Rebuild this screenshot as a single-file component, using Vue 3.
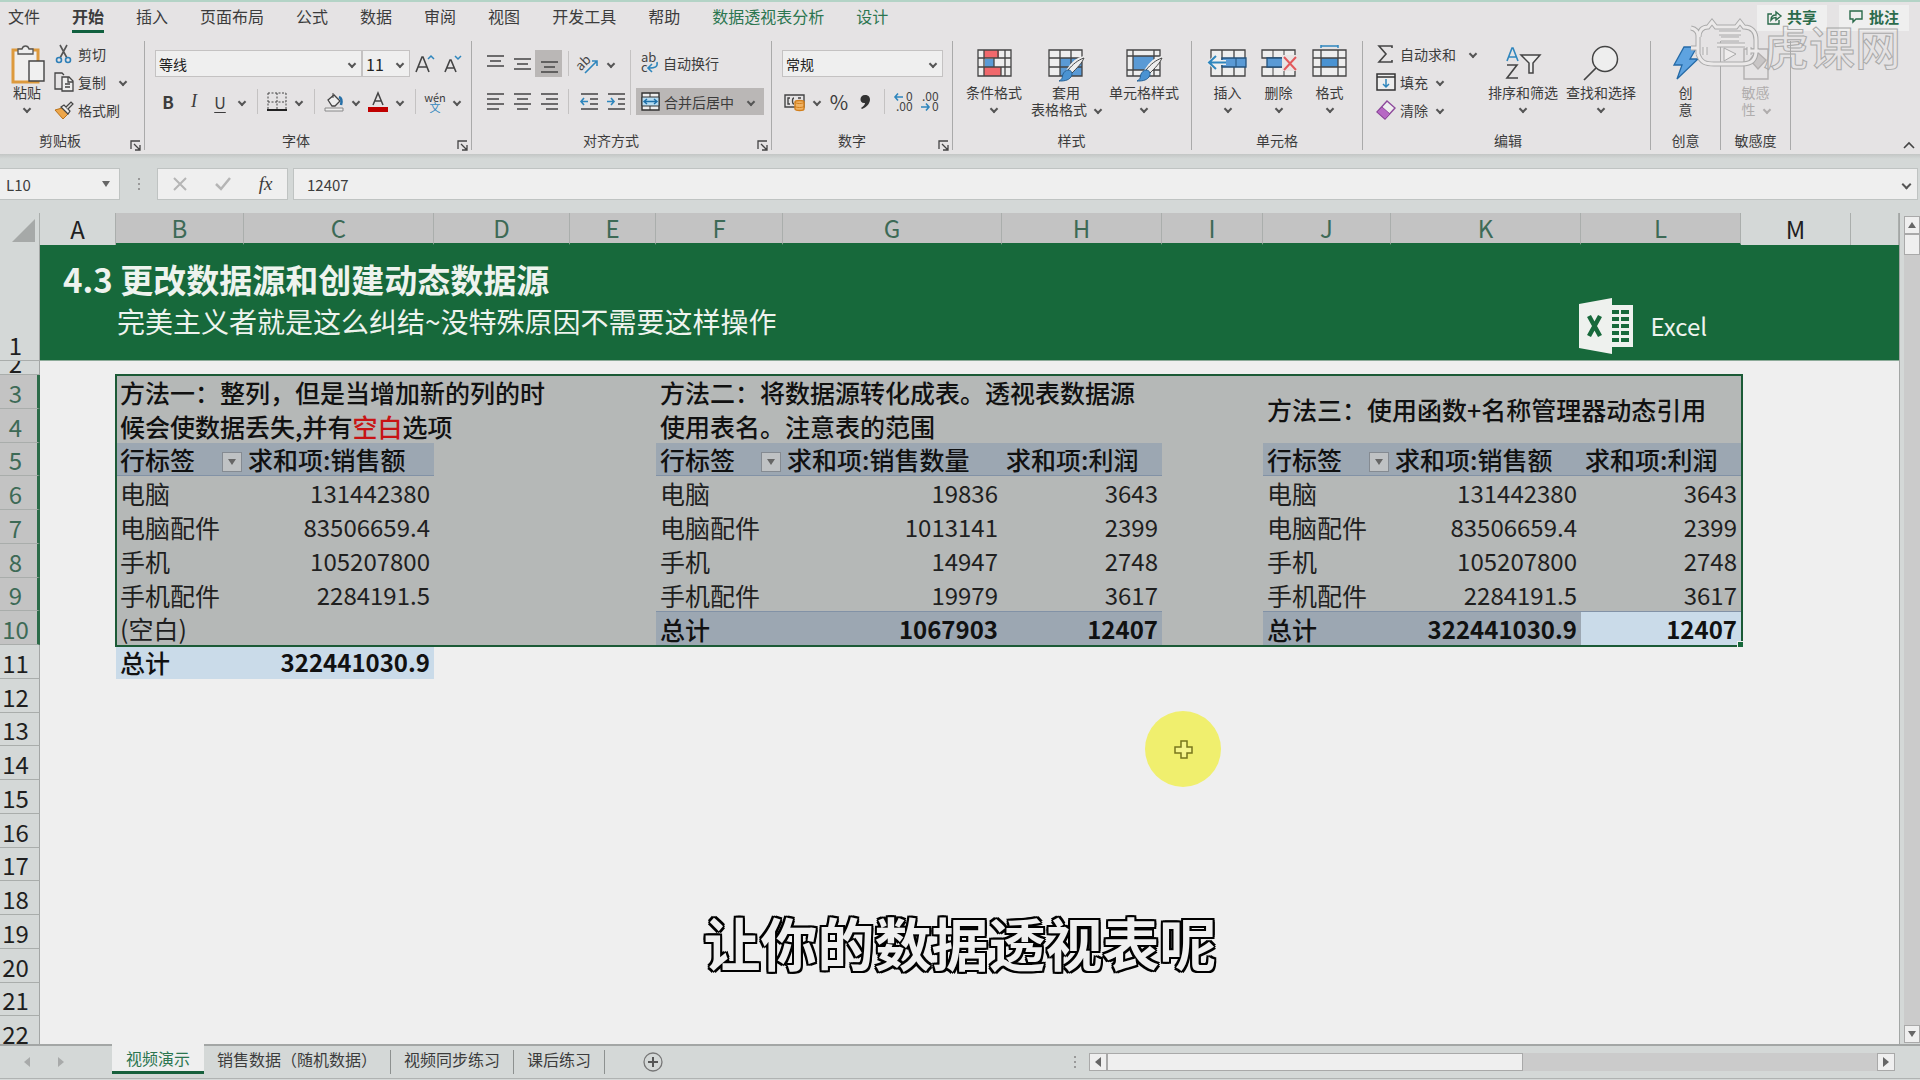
<template>
  <div class="app">
    <header class="tab-bar">
      <nav class="tabs">
        <a
          v-for="tab in tabs"
          :key="tab.name"
          href="#"
          class="tab"
          :class="{ active: tab.active, context: tab.context }"
        >{{ tab.name }}</a>
      </nav>
      <div class="tab-actions">
        <button class="action">
          <svg width="15" height="16" viewBox="0 0 15 16" fill="none" stroke="#2b6b4b" stroke-width="1.4">
            <path d="M5 5H1v10h11v-4M4 11c0-4 3-5 5-5V3l5 4-5 4V8.500c-2 0-4 1-5 2.500z" />
          </svg>
          共享
        </button>
        <button class="action">
          <svg width="15" height="14" viewBox="0 0 15 14" fill="none" stroke="#2b6b4b" stroke-width="1.4">
            <path d="M1 1h12v8H7l-3 3V9H1z" />
          </svg>
          批注
        </button>
      </div>
    </header>

    <section class="ribbon">
      <div class="group clipboard">
        <div class="group-body">
          <button class="big paste">
            <svg width="36" height="38" viewBox="0 0 36 38">
              <path d="M4 5h25v32H4z" fill="#f0efee" stroke="#dd9a3d" stroke-width="3" />
              <path d="M9 9V4h4c1-4 6-4 7 0h4v5z" fill="#eee" stroke="#555" stroke-width="1.3" />
              <path d="M20 16h15v20H20z" fill="#f0f0f0" stroke="#444" stroke-width="1.4" />
            </svg>
            <span>粘贴</span>
            <i class="caret"></i>
          </button>
          <div class="stack">
            <button class="small">
              <svg width="20" height="20" viewBox="0 0 20 20" fill="none">
                <path d="M6 1l7 13M13 1L6 14" stroke="#555" stroke-width="1.6" />
                <circle cx="5" cy="16" r="2.500" stroke="#2d7fb8" stroke-width="1.6" />
                <circle cx="14" cy="16" r="2.500" stroke="#2d7fb8" stroke-width="1.6" />
              </svg>
              剪切
            </button>
            <button class="small">
              <svg width="20" height="20" viewBox="0 0 20 20" fill="none" stroke="#444" stroke-width="1.3">
                <path d="M8 17H1V1h7l2 2" />
                <path d="M8 5h7l4 4v10H8z" fill="#eee" />
                <path d="M14 5v5h5M11 12h5M11 15h5" />
              </svg>
              复制
              <i class="caret copy-caret"></i>
            </button>
            <button class="small">
              <svg width="20" height="20" viewBox="0 0 20 20">
                <path d="M1 10l7-2 6 6-5 5z" fill="#eda64a" stroke="#b97118" />
                <path d="M7 7l3-2 6 6-2 3z" fill="#eee" stroke="#444" stroke-width="1.2" />
                <path d="M12 7l5-5 2 2-5 5" fill="#ddd" stroke="#444" stroke-width="1.2" />
              </svg>
              格式刷
            </button>
          </div>
        </div>
        <footer class="group-footer"><span>剪贴板</span><LaunchIcon /></footer>
      </div>

      <div class="group font">
        <div class="group-body rows">
          <div class="row">
            <label class="select font-name">
              <select aria-label="字体"><option>等线</option></select>
              <i class="caret"></i>
            </label>
            <label class="select font-size">
              <select aria-label="字号"><option>11</option></select>
              <i class="caret"></i>
            </label>
            <button class="tool wide" aria-label="增大字号">
              <svg width="20" height="20" viewBox="0 0 20 20" fill="none">
                <path d="M1 18L7 3h1l6 15M3 13h9" stroke="#444" stroke-width="1.6" />
                <path d="M13 5l3-3 3 3" stroke="#2f86bd" stroke-width="1.5" />
              </svg>
            </button>
            <button class="tool" aria-label="减小字号">
              <svg width="18" height="20" viewBox="0 0 18 20" fill="none">
                <path d="M1 18L6 6h1l5 12M3 14h7" stroke="#444" stroke-width="1.600" />
                <path d="M11 2l3 3 3-3" stroke="#2f86bd" stroke-width="1.5" />
              </svg>
            </button>
          </div>
          <div class="row">
            <button class="tool bold">B</button>
            <button class="tool italic">I</button>
            <button class="tool underline">U</button>
            <button class="drop" aria-label="下划线"><i class="caret"></i></button>
            <span class="divider"></span>
            <button class="tool" aria-label="边框">
              <svg width="20" height="20" viewBox="0 0 20 20" fill="none" stroke="#444">
                <path d="M1 1h18M1 10h18M1 1v17M10 1v17M19 1v17" stroke-dasharray="2 1.500" />
                <path d="M0 18h20" stroke="#222" stroke-width="2" />
              </svg>
            </button>
            <button class="drop" aria-label="边框选项"><i class="caret"></i></button>
            <span class="divider"></span>
            <button class="tool" aria-label="填充颜色">
              <svg width="20" height="20" viewBox="0 0 20 20" fill="none">
                <path d="M4 8l6-5 6 6-5 5H8z" fill="#eee" stroke="#444" stroke-width="1.3" />
                <path d="M9 6V1" stroke="#444" />
                <path d="M15 5c3 1 3 4 2 8" stroke="#2670a8" stroke-width="2.500" />
                <path d="M1 16h18v3H1z" fill="#eee" stroke="#888" />
              </svg>
            </button>
            <button class="drop" aria-label="填充选项"><i class="caret"></i></button>
            <button class="tool" aria-label="字体颜色">
              <svg width="20" height="20" viewBox="0 0 20 20" fill="none">
                <path d="M5 13l5-12 5 12M7 9h6" stroke="#444" stroke-width="1.5" />
                <path d="M0 15h20v5H0z" fill="#c00000" />
              </svg>
            </button>
            <button class="drop" aria-label="字体颜色选项"><i class="caret"></i></button>
            <span class="divider"></span>
            <button class="tool phonetic"><span>wén</span><b>文</b></button>
            <button class="drop" aria-label="拼音选项"><i class="caret"></i></button>
          </div>
        </div>
        <footer class="group-footer"><span>字体</span><LaunchIcon /></footer>
      </div>

      <div class="group align">
        <div class="group-body rows">
          <div class="columns">
            <div class="column">
              <div class="row">
                <button
                  v-for="(lines, i) in vertical"
                  :key="i"
                  class="tool line"
                  :class="{ pressed: i === 2 }"
                  :aria-label="'垂直对齐' + (i + 1)"
                >
                  <svg width="18" height="20" viewBox="0 0 18 20" stroke="#444" stroke-width="1.400"><path :d="lines" /></svg>
                </button>
                <span class="divider"></span>
                <button class="tool line" aria-label="方向">
                  <svg width="20" height="20" viewBox="0 0 20 20" fill="none">
                    <text x="-3" y="12" font-size="13" fill="#444" transform="rotate(-45 6 9)">ab</text>
                    <path d="M6 19L18 7M13 7h5v5" stroke="#2f86bd" stroke-width="1.600" />
                  </svg>
                </button>
                <button class="drop" aria-label="方向选项"><i class="caret"></i></button>
              </div>
              <div class="row">
                <button v-for="(lines, i) in horizontal" :key="i" class="tool line" :aria-label="'水平对齐' + (i + 1)">
                  <svg width="18" height="18" viewBox="0 0 18 18" stroke="#444" stroke-width="1.400"><path :d="lines" /></svg>
                </button>
                <span class="divider"></span>
                <button class="tool line" aria-label="减少缩进">
                  <svg width="18" height="18" viewBox="0 0 18 18" fill="none" stroke="#444" stroke-width="1.400">
                    <path d="M1 1h17M10 6h8M10 11h8M1 16h17" />
                    <path d="M8 8.500H1M4 5L1 8.500 4 12" stroke="#2f86bd" stroke-width="1.600" />
                  </svg>
                </button>
                <button class="tool line" aria-label="增加缩进">
                  <svg width="18" height="18" viewBox="0 0 18 18" fill="none" stroke="#444" stroke-width="1.400">
                    <path d="M1 1h17M11 6h7M11 11h7M1 16h17" />
                    <path d="M0 8.500h7M4 5l3 3.500L4 12" stroke="#2f86bd" stroke-width="1.600" />
                  </svg>
                </button>
              </div>
            </div>
            <div class="column wrap">
              <button class="small text-tool">
                <svg width="18" height="20" viewBox="0 0 18 20" fill="none">
                  <text x="0" y="9" font-size="13" fill="#444">ab</text>
                  <text x="0" y="19" font-size="13" fill="#444">c</text>
                  <path d="M16 9c1 5-2 6-8 6M11 11l-4 4 4 4" stroke="#2f86bd" stroke-width="1.600" />
                </svg>
                自动换行
              </button>
              <button class="small text-tool merge">
                <svg width="19" height="19" viewBox="0 0 19 19" fill="none" stroke="#333">
                  <path d="M1 1h17v17H1z" fill="#eee" stroke-width="1.400" />
                  <path d="M1 5h17v9H1z" fill="#b6dcf2" />
                  <path d="M9 1v4M9 14v4" />
                  <path d="M3 9.500h13M6 7L3 9.500 6 12M13 7l3 2.500-3 2.500" stroke="#1d6fa8" stroke-width="1.400" />
                </svg>
                合并后居中
                <i class="caret merge-caret"></i>
              </button>
            </div>
          </div>
        </div>
        <footer class="group-footer"><span>对齐方式</span><LaunchIcon /></footer>
      </div>

      <div class="group number">
        <div class="group-body rows">
          <div class="row">
            <label class="select format">
              <select aria-label="数字格式"><option>常规</option></select>
              <i class="caret"></i>
            </label>
          </div>
          <div class="row">
            <button class="tool" aria-label="会计数字格式">
              <svg width="22" height="18" viewBox="0 0 22 18" fill="none">
                <path d="M1 2h19v12H1z" stroke="#444" stroke-width="1.400" />
                <path d="M6 5H4v6h2M10 5c-2 0-2 6 0 6M14 5h3" stroke="#444" stroke-width="1.400" />
                <path d="M11 9c0-2 9-2 9 0v7c0 2-9 2-9 0z" fill="#f0b263" stroke="#d27f1c" stroke-width="1.400" />
                <path d="M11 9c0 2 9 2 9 0M11 13c0 2 9 2 9 0" stroke="#d27f1c" />
              </svg>
            </button>
            <button class="drop" aria-label="会计格式选项"><i class="caret"></i></button>
            <button class="tool percent">%</button>
            <button class="tool" aria-label="千位分隔样式">
              <svg width="12" height="18" viewBox="0 0 12 18">
                <path d="M6 2c8 0 6 11-3 14l-1-1c3-2 4-4 4-5-6 1-6-8 0-8z" fill="#333" />
              </svg>
            </button>
            <span class="divider"></span>
            <button class="tool" aria-label="增加小数位数">
              <svg width="20" height="20" viewBox="0 0 20 20" fill="none">
                <path d="M9 5H1M4 1.500L1 5l3 3.500" stroke="#2f86bd" stroke-width="1.600" />
                <text x="12" y="9" font-size="12" fill="#444">0</text>
                <text x="2" y="19" font-size="12" fill="#444">.00</text>
              </svg>
            </button>
            <button class="tool" aria-label="减少小数位数">
              <svg width="20" height="20" viewBox="0 0 20 20" fill="none">
                <path d="M1 15h8M6 11.500L9 15l-3 3.500" stroke="#2f86bd" stroke-width="1.600" />
                <text x="2" y="9" font-size="12" fill="#444">.00</text>
                <text x="12" y="19" font-size="12" fill="#444">0</text>
              </svg>
            </button>
          </div>
        </div>
        <footer class="group-footer"><span>数字</span><LaunchIcon /></footer>
      </div>

      <div class="group styles">
        <div class="group-body">
          <button class="big w72">
            <svg width="36" height="38" viewBox="0 0 36 38">
              <path d="M2 5h33v26H2z" fill="#eee" />
              <path d="M8 5h15v8H8zM8 22h17v9H8z" fill="#f0686c" />
              <path d="M9 14h9v8H9z" fill="#5a9ad5" />
              <path d="M2 5h33v26H2zM2 13h33M2 22h33M8 5v26M29 5v26M22 5v8M18 13v9M25 22v9" fill="none" stroke="#444" stroke-width="1.300" />
            </svg>
            <span>条件格式</span>
            <i class="caret"></i>
          </button>
          <button class="big w72">
            <svg width="36" height="38" viewBox="0 0 36 38">
              <path d="M1 5h33v26H1z" fill="#eee" />
              <path d="M12 13h22v18H12z" fill="#5a9ad5" />
              <path d="M1 5h33v26H1zM1 13h33M1 22h33M12 5v26M23 5v26" fill="none" stroke="#444" stroke-width="1.300" />
              <path d="M36 13c-4 2-11 9-14 14l-2-1c3-5 9-12 16-13z" fill="#eee" stroke="#eee" stroke-width="4" />
              <path d="M36 13c-2 5-7 10-12 15l-4-3c5-6 10-10 16-12z" fill="#eee" stroke="#444" />
              <path d="M20 25c4 0 5 4 3 7-3 4-8 4-12 4 4-2 3-4 4-7 1-2 3-4 5-4z" fill="#4a93d2" stroke="#276194" />
            </svg>
            <span>套用</span>
            <span class="inline">表格格式 <i class="caret"></i></span>
          </button>
          <button class="big w84">
            <svg width="36" height="38" viewBox="0 0 36 38">
              <path d="M1 5h33v26H1z" fill="#eee" />
              <path d="M7 11h21v14H7z" fill="#5a9ad5" />
              <path d="M1 5h33v26H1zM1 11h33M1 25h33M7 5v26M28 5v26" fill="none" stroke="#444" stroke-width="1.300" />
              <path d="M36 13c-4 2-11 9-14 14l-2-1c3-5 9-12 16-13z" fill="#eee" stroke="#eee" stroke-width="4" />
              <path d="M36 13c-2 5-7 10-12 15l-4-3c5-6 10-10 16-12z" fill="#eee" stroke="#444" />
              <path d="M20 25c4 0 5 4 3 7-3 4-8 4-12 4 4-2 3-4 4-7 1-2 3-4 5-4z" fill="#4a93d2" stroke="#276194" />
            </svg>
            <span>单元格样式</span>
            <i class="caret"></i>
          </button>
        </div>
        <footer class="group-footer"><span>样式</span></footer>
      </div>

      <div class="group cells">
        <div class="group-body">
          <button class="big w51">
            <svg width="40" height="38" viewBox="0 0 40 38">
              <path d="M3 5h34v26H3z" fill="#eee" />
              <path d="M3 5h34v26H3zM14 5v26M26 5v26" fill="none" stroke="#444" stroke-width="1.300" />
              <path d="M14 13h24v9H14z" fill="#5a9ad5" stroke="#24527b" stroke-width="1.300" />
              <path d="M28 13v9" stroke="#24527b" />
              <path d="M18 17.500H3M9 11l-7 6.500L9 24" fill="none" stroke="#eee" stroke-width="5" />
              <path d="M18 17.500H2M8 11l-7 6.500L8 24" fill="none" stroke="#2f86bd" stroke-width="2" />
            </svg>
            <span>插入</span>
            <i class="caret"></i>
          </button>
          <button class="big w51">
            <svg width="36" height="38" viewBox="0 0 36 38">
              <path d="M1 5h33v8H1zM1 22h33v9H1z" fill="#eee" stroke="#444" stroke-width="1.300" />
              <path d="M12 5v8M23 5v8M12 22v9M23 22v9" stroke="#444" />
              <path d="M6 13h16v9H6z" fill="#5a9ad5" stroke="#24527b" stroke-width="1.300" />
              <path d="M21 10h15v16H21z" fill="#e8e4e4" />
              <path d="M23 12l12 13M35 12L23 25" stroke="#e2595c" stroke-width="2" />
            </svg>
            <span>删除</span>
            <i class="caret"></i>
          </button>
          <button class="big w51">
            <svg width="36" height="38" viewBox="0 0 36 38">
              <path d="M1 5h33v26H1z" fill="#eee" />
              <path d="M9 13h17v9H9z" fill="#4a93d2" />
              <path d="M1 5h33v26H1zM1 13h33M1 22h33M9 5v26M26 5v26" fill="none" stroke="#444" stroke-width="1.300" />
              <path d="M9 1h17M9 0v3M26 0v3" stroke="#2f86bd" stroke-width="1.500" />
            </svg>
            <span>格式</span>
            <i class="caret"></i>
          </button>
        </div>
        <footer class="group-footer"><span>单元格</span></footer>
      </div>

      <div class="group editing">
        <div class="group-body">
          <div class="stack edit-stack">
            <button class="small">
              <svg width="20" height="20" viewBox="0 0 20 20" fill="none" stroke="#444" stroke-width="1.600">
                <path d="M16 4V2H3l7 8-7 8h13v-2" />
              </svg>
              自动求和
              <i class="caret sum-caret"></i>
            </button>
            <button class="small">
              <svg width="20" height="20" viewBox="0 0 20 20" fill="none" stroke="#333" stroke-width="1.500">
                <path d="M1 2h18v16H1zM1 5h18" fill="#eee" />
                <path d="M10 7v8M7 12l3 3 3-3" stroke="#2f86bd" />
              </svg>
              填充
              <i class="caret"></i>
            </button>
            <button class="small">
              <svg width="20" height="20" viewBox="0 0 20 20">
                <path d="M11 1l8 7-10 11-8-7z" fill="#eee" stroke="#8e4a9c" stroke-width="1.400" />
                <path d="M6 7l8 7-5 5-8-7z" fill="#b768c4" stroke="#8e4a9c" />
              </svg>
              清除
              <i class="caret"></i>
            </button>
          </div>
          <button class="big w78">
            <svg width="36" height="38" viewBox="0 0 36 38" fill="none">
              <path d="M2 16L7 3h1l5 13M4 12h7" stroke="#2f86bd" stroke-width="1.600" />
              <path d="M2 20h10L2 33h11" stroke="#444" stroke-width="1.600" />
              <path d="M16 10h19l-7 8v10h-4V18z" fill="#eee" stroke="#444" stroke-width="1.500" />
            </svg>
            <span>排序和筛选</span>
            <i class="caret"></i>
          </button>
          <button class="big w78">
            <svg width="36" height="38" viewBox="0 0 36 38">
              <circle cx="22" cy="14" r="12.500" fill="#eee" stroke="#444" stroke-width="1.500" />
              <path d="M13 23L1 35" stroke="#444" stroke-width="1.700" />
            </svg>
            <span>查找和选择</span>
            <i class="caret"></i>
          </button>
        </div>
        <footer class="group-footer"><span>编辑</span></footer>
      </div>

      <div class="group ideas">
        <div class="group-body center">
          <button class="big">
            <svg width="28" height="38" viewBox="0 0 28 38">
              <path d="M12 2h13l-7 12h8L5 34l5-14H2z" fill="#5ea3e0" stroke="#256aa6" stroke-width="1.300" />
            </svg>
            <span>创</span>
            <span>意</span>
          </button>
        </div>
        <footer class="group-footer"><span>创意</span></footer>
      </div>

      <div class="group ideas">
        <div class="group-body center">
          <button class="big disabled" disabled>
            <svg width="28" height="38" viewBox="0 0 28 38" fill="none" stroke="#b3b0b0" stroke-width="1.400">
              <path d="M2 4h24v30H2z" />
              <path d="M14 6l10 9-8 9-8-9z" fill="#c9c6c6" />
            </svg>
            <span>敏感</span>
            <span class="inline">性 <i class="caret"></i></span>
          </button>
        </div>
        <footer class="group-footer"><span>敏感度</span></footer>
      </div>

      <button class="collapse" aria-label="折叠功能区">
        <svg width="12" height="8" viewBox="0 0 12 8" fill="none" stroke="#444" stroke-width="1.600"><path d="M1 7l5-5 5 5" /></svg>
      </button>
    </section>

    <section class="formula-bar">
      <div class="name-box">
        <input aria-label="名称框" value="L10" />
        <i class="triangle"></i>
      </div>
      <span class="dots"><i></i><i></i><i></i></span>
      <div class="formula-buttons">
        <button aria-label="取消">
          <svg width="14" height="14" viewBox="0 0 14 14" stroke="#b5b5b5" stroke-width="2"><path d="M1 1l12 12M13 1L1 13" /></svg>
        </button>
        <button aria-label="输入">
          <svg width="16" height="14" viewBox="0 0 16 14" fill="none" stroke="#b5b5b5" stroke-width="2.500"><path d="M1 7l5 5 9-11" /></svg>
        </button>
        <button class="fx">fx</button>
      </div>
      <div class="formula-input">
        <input aria-label="编辑栏" value="12407" />
        <i class="caret strong"></i>
      </div>
    </section>

    <main class="workspace">
      <div class="sheet">
        <table>
          <colgroup>
            <col class="col-head" />
            <col v-for="c in columns" :key="c" :class="'col-' + c" />
          </colgroup>
          <thead>
            <tr>
              <th class="corner"><i></i></th>
              <th v-for="c in columns" :key="c" :class="{ on: inSelection(c, 3) }">{{ c === 'N' ? '' : c }}</th>
            </tr>
          </thead>
          <tbody>
            <tr v-for="n in rowNumbers" :key="n" :class="'row-' + n">
              <th :class="{ on: n > 2 && n < 11 }"><span>{{ n }}</span></th>
              <td v-if="n === 1" colspan="14" class="banner">
                <div class="banner-inner">
                  <div>
                    <h1>4.3 更改数据源和创建动态数据源</h1>
                    <p>完美主义者就是这么纠结~没特殊原因不需要这样操作</p>
                  </div>
                  <div class="brand">
                    <svg width="55" height="56" viewBox="0 0 55 56">
                      <path d="M30 7h24v42H30z" fill="#eef1ee" />
                      <path d="M33 12h7v4h-7zM42 12h8v4h-8zM33 19h7v4h-7zM42 19h8v4h-8zM33 26h7v4h-7zM42 26h8v4h-8zM33 33h7v4h-7zM42 33h8v4h-8zM33 40h7v4h-7zM42 40h8v4h-8z" fill="#17693b" />
                      <path d="M0 6L33 0v56L0 50z" fill="#eef1ee" />
                      <path d="M10 18l11 20M21 18L10 38" stroke="#17693b" stroke-width="4.500" />
                    </svg>
                    <span>Excel</span>
                  </div>
                </div>
              </td>
              <template v-else>
                <td
                  v-for="cell in cellsOf(n)"
                  :key="cell.col"
                  :colspan="cell.colspan"
                  :rowspan="cell.rowspan"
                  :class="cell.cls"
                >
                  <div v-if="cell.filter" class="filter-cell">
                    {{ cell.text }}
                    <button aria-label="筛选"><i class="triangle"></i></button>
                  </div>
                  <template v-else-if="cell.parts">
                    <template v-for="(p, i) in cell.parts" :key="i">
                      <br v-if="p === '\n'" />
                      <em v-else-if="p === '空白'">{{ p }}</em>
                      <template v-else>{{ p }}</template>
                    </template>
                  </template>
                  <template v-else>{{ cell.text }}</template>
                </td>
              </template>
            </tr>
          </tbody>
        </table>
        <div class="selection"><i></i></div>
        <div class="pointer">
          <svg width="19" height="19" viewBox="0 0 19 19">
            <path d="M7 1h6v6h5v6h-5v5H7v-5H1V7h6z" fill="#f5f48a" stroke="#77761c" stroke-width="1.500" />
          </svg>
        </div>
      </div>
      <div class="v-scroll">
        <button class="up" aria-label="向上滚动"><i class="triangle"></i></button>
        <div class="v-track"><div class="v-thumb"></div></div>
        <button aria-label="向下滚动"><i class="triangle"></i></button>
      </div>
    </main>

    <footer class="sheet-bar">
      <div class="sheet-nav">
        <button aria-label="上一张"><i class="triangle left"></i></button>
        <button aria-label="下一张"><i class="triangle right"></i></button>
      </div>
      <a v-for="(s, i) in sheets" :key="s" href="#" class="sheet-tab" :class="{ active: i === 0 }">{{ s }}</a>
      <button class="add-sheet" aria-label="新工作表">
        <svg width="20" height="20" viewBox="0 0 20 20" fill="none" stroke="#777" stroke-width="1.300">
          <circle cx="10" cy="10" r="9" />
          <path d="M10 5v10M5 10h10" stroke="#555" stroke-width="2" />
        </svg>
      </button>
      <span class="dots bar-dots"><i></i><i></i><i></i></span>
      <div class="h-scroll">
        <button aria-label="向左滚动"><i class="triangle left"></i></button>
        <div class="h-track"><div class="h-thumb"></div></div>
        <button aria-label="向右滚动"><i class="triangle right"></i></button>
      </div>
    </footer>

    <div class="watermark">
      <svg width="76" height="50" viewBox="0 0 76 50" fill="none">
        <g v-for="pass in ['outer', 'inner']" :key="pass" :class="pass">
          <path d="M4 8c5 1 7 4 7 8v18M4 28h7M11 34c3 9 8 10 16 10h28c10 0 14-5 14-13V20c0-8-4-13-12-13l-4-5-4 5H29l-4-5-4 5c-6 0-9 4-9 10" />
          <path d="M32 13h22M34 19h18M30 25h28M18 27v8M62 27v8M62 31h10" />
        </g>
        <path d="M37 28l12 6-12 7z" stroke="#aaa" fill="#efeded" />
      </svg>
      <span>虎课网</span>
    </div>

    <p class="subtitle">让你的数据透视表呢</p>
  </div>
</template>

<script setup>
import { h } from 'vue'

const tabs = [
  { name: '文件' },
  { name: '开始', active: true },
  { name: '插入' },
  { name: '页面布局' },
  { name: '公式' },
  { name: '数据' },
  { name: '审阅' },
  { name: '视图' },
  { name: '开发工具' },
  { name: '帮助' },
  { name: '数据透视表分析', context: true },
  { name: '设计', context: true }
]

const vertical = ['M1 2h17M4 7h11M1 12h17', 'M1 5h17M4 10h11M1 15h17', 'M1 8h17M4 13h11M1 18h17']

const horizontal = [
  'M1 1h17M1 6h12M1 11h17M1 16h12',
  'M1 1h17M4 6h11M1 11h17M4 16h11',
  'M1 1h17M6 6h12M1 11h17M6 16h12'
]

const LaunchIcon = () =>
  h('button', { class: 'launcher', 'aria-label': '更多设置' }, [
    h('svg', { width: 11, height: 11, viewBox: '0 0 11 11', fill: 'none', stroke: '#444', 'stroke-width': 1.3 }, [
      h('path', { d: 'M1 9V1h9M4 4l6 6M10 5v5H5' })
    ])
  ])

const columns = 'ABCDEFGHIJKLMN'.split('')
const rowNumbers = Array.from({ length: 22 }, (_, i) => i + 1)
const sheets = ['视频演示', '销售数据（随机数据）', '视频同步练习', '课后练习']

const merged = {
  B: ['方法一：整列，但是当增加新的列的时', '\n', '候会使数据丢失,并有', '空白', '选项'],
  F: ['方法二：将数据源转化成表。透视表数据源', '\n', '使用表名。注意表的范围'],
  J: ['方法三：使用函数+名称管理器动态引用']
}

// rows 5 to 11 of the three pivot tables, keyed by first column
const pivots = {
  B: [
    ['行标签', '求和项:销售额'],
    ['电脑', '131442380'],
    ['电脑配件', '83506659.4'],
    ['手机', '105207800'],
    ['手机配件', '2284191.5'],
    ['(空白)', ''],
    ['总计', '322441030.9']
  ],
  F: [
    ['行标签', '求和项:销售数量', '求和项:利润'],
    ['电脑', '19836', '3643'],
    ['电脑配件', '1013141', '2399'],
    ['手机', '14947', '2748'],
    ['手机配件', '19979', '3617'],
    ['总计', '1067903', '12407']
  ],
  J: [
    ['行标签', '求和项:销售额', '求和项:利润'],
    ['电脑', '131442380', '3643'],
    ['电脑配件', '83506659.4', '2399'],
    ['手机', '105207800', '2748'],
    ['手机配件', '2284191.5', '3617'],
    ['总计', '322441030.9', '12407']
  ]
}

const values = {}
for (const [start, rows] of Object.entries(pivots)) {
  rows.forEach((row, r) => {
    row.forEach((text, c) => {
      values[columns[columns.indexOf(start) + c] + (r + 5)] = {
        text,
        filter: r === 0 && c === 0,
        cls: {
          head: r === 0,
          total: row[0] === '总计',
          num: r > 0 && c > 0
        }
      }
    })
  })
}

function inSelection(col, n) {
  return col >= 'B' && col <= 'L' && n >= 3 && n <= 10
}

function cellsOf(n) {
  const list = []
  for (const col of columns) {
    const sel = inSelection(col, n)
    if (n === 3 || n === 4) {
      if (merged[col] && n === 3) {
        list.push({ col, parts: merged[col], colspan: 3, rowspan: 2, cls: 'sel note' })
      } else if ('AEIMN'.includes(col)) {
        list.push({ col, cls: { sel } })
      }
      continue
    }
    const v = values[col + n] || {}
    list.push({ col, ...v, cls: { ...v.cls, sel, current: col === 'L' && n === 10 } })
  }
  return list
}
</script>

<style>
body {
  margin: 0;
  background: #d4d8d7;
}
</style>

<style scoped>
.app {
  position: relative;
  display: flex;
  flex-direction: column;
  height: 100vh;
  overflow: hidden;
  font-family: "Noto Sans CJK SC", sans-serif;
  font-size: 14px;
  color: #3c3c3c;
  background: #d4d8d7;
}

button,
input,
select {
  margin: 0;
  padding: 0;
  border: 0;
  border-radius: 0;
  background: none;
  font: inherit;
  color: inherit;
}

a {
  color: inherit;
  text-decoration: none;
}

svg {
  display: block;
  flex: none;
  overflow: visible;
}

.caret {
  flex: none;
  width: 4px;
  height: 4px;
  border-right: 2px solid #555;
  border-bottom: 2px solid #555;
  transform: rotate(45deg);
}

.triangle {
  border: 4px solid transparent;
  border-top: 6px solid #666;
  border-bottom: 0;
}

.triangle.left {
  border: 5px solid transparent;
  border-right: 6px solid #666;
  border-left: 0;
}

.triangle.right {
  border: 5px solid transparent;
  border-left: 6px solid #666;
  border-right: 0;
}

/* tabs */
.tab-bar {
  display: flex;
  justify-content: space-between;
  height: 36px;
  border-top: 2px solid #b3d3c6;
  background: #e5e3e4;
  box-sizing: border-box;
}

.tabs {
  display: flex;
  gap: 32px;
  padding-left: 8px;
}

.tab {
  height: 31px;
  font-size: 16px;
  line-height: 28px;
  box-sizing: border-box;
}

.tab.active {
  border-bottom: 3px solid #11603f;
  font-weight: 700;
}

.tab.context {
  color: #2c7650;
}

.tab-actions {
  display: flex;
  gap: 12px;
  padding: 3px 11px 0 0;
}

.action {
  display: flex;
  align-items: center;
  justify-content: center;
  gap: 5px;
  width: 70px;
  height: 26px;
  padding-bottom: 3px;
  background: #efefef;
  font-size: 15px;
  font-weight: 700;
  color: #2b6b4b;
}

/* ribbon */
.ribbon {
  display: flex;
  align-items: flex-start;
  height: 118px;
  padding-top: 5px;
  box-sizing: border-box;
  background: #e5e3e4;
}

.group {
  display: flex;
  flex-direction: column;
  height: 109px;
  border-right: 1px solid #aaa;
  box-sizing: border-box;
}

.clipboard { width: 145px; }
.font { width: 327px; padding-left: 10px; }
.align { width: 300px; padding-left: 9px; }
.number { width: 181px; padding-left: 10px; }
.styles { width: 239px; padding-left: 5px; }
.cells { width: 171px; padding-left: 10px; }
.editing { width: 288px; padding-left: 13px; }
.ideas { width: 70px; }

.group-body {
  display: flex;
  flex: 1;
}

.group-body.center {
  justify-content: center;
}

.group-body.rows {
  flex-direction: column;
  gap: 11px;
  padding-top: 9px;
}

.group-footer {
  display: flex;
  align-items: center;
  height: 18px;
  line-height: 16px;
}

.group-footer span {
  flex: 1;
  padding-bottom: 2px;
  text-align: center;
}

.group :deep(.launcher) {
  width: 24px;
  height: 16px;
  padding: 4px 0 0 6px;
  border: 0;
  background: none;
}

.font .group-footer,
.cells .group-footer,
.editing .group-footer {
  margin-left: -10px;
}

.align .group-footer,
.styles .group-footer,
.number .group-footer {
  margin-left: -6px;
}

.row {
  display: flex;
  align-items: center;
  height: 27px;
}

.columns {
  display: flex;
}

.column {
  display: flex;
  flex-direction: column;
  gap: 11px;
}

.column.wrap {
  width: 128px;
  margin-left: 1px;
  padding-left: 5px;
  border-left: 1px solid #c4c2c2;
}

.big {
  display: flex;
  flex-direction: column;
  align-items: center;
  padding-top: 4px;
  line-height: 17px;
  white-space: nowrap;
}

.big svg {
  margin-bottom: 1px;
}

.big > .caret {
  margin-top: 5px;
}

.inline {
  display: flex;
  align-items: center;
  gap: 8px;
}

.paste { width: 54px; }
.w72 { width: 72px; }
.w84 { width: 84px; }
.w51 { width: 51px; }
.w78 { width: 78px; }

.disabled {
  color: #b0adad;
}

.disabled .caret {
  border-color: #b0adad;
}

.small {
  display: flex;
  align-items: center;
  gap: 4px;
  height: 28px;
  padding-bottom: 2px;
  white-space: nowrap;
}

.small .caret {
  margin-left: 5px;
}

.small .copy-caret {
  margin-left: 10px;
}

.small .sum-caret {
  margin-left: 10px;
}

.edit-stack {
  width: 108px;
}

.text-tool {
  height: 27px;
  padding-left: 5px;
}

.merge {
  padding-bottom: 0;
  background: #bab7b6;
}

.small .merge-caret {
  margin: 0 8px 0 10px;
}

.tool {
  display: flex;
  align-items: center;
  justify-content: center;
  width: 26px;
  height: 27px;
}

.tool.line {
  width: 27px;
}

.tool.pressed {
  background: #bab7b6;
}

.tool.wide {
  width: 30px;
}

.drop {
  display: flex;
  align-items: center;
  justify-content: center;
  width: 18px;
  height: 27px;
}

.divider {
  width: 1px;
  height: 25px;
  margin: 0 6px;
  background: #c4c2c2;
}

.bold {
  font-size: 17px;
  font-weight: 700;
}

.italic {
  font-family: "Liberation Serif", serif;
  font-size: 18px;
  font-style: italic;
}

.underline {
  font-size: 16px;
  text-decoration: underline;
  text-underline-offset: 3px;
}

.percent {
  font-size: 20px;
}

.phonetic {
  flex-direction: column;
  font-size: 11px;
  line-height: 10px;
}

.phonetic b {
  font-weight: 400;
  color: #2f86bd;
}

.select {
  position: relative;
  display: flex;
  align-items: center;
  height: 27px;
  border: 1px solid #c4c2c2;
  box-sizing: border-box;
  background: #efefef;
}

.select select {
  width: 100%;
  height: 100%;
  padding-left: 3px;
  appearance: none;
  color: #222;
}

.select .caret {
  position: absolute;
  right: 6px;
}

.font-name { width: 207px; }
.font-size { width: 48px; }
.format { width: 161px; }

.font-size select {
  font-size: 16px;
}

.collapse {
  margin: 100px 5px 0 auto;
}

/* formula bar */
.formula-bar {
  display: flex;
  gap: 5px;
  height: 59px;
  padding: 14px 2px 13px 0;
  box-sizing: border-box;
  background: linear-gradient(#c3c6c5, #d4d8d7 5px);
}

.name-box,
.formula-buttons,
.formula-input {
  display: flex;
  align-items: center;
  border: 1px solid #bfc3c2;
  box-sizing: border-box;
  background: #efefef;
  font-size: 15px;
}

.name-box {
  width: 120px;
  border-left: 0;
}

.name-box input {
  width: 102px;
  padding-left: 6px;
  box-sizing: border-box;
}

.dots {
  display: flex;
  flex-direction: column;
  align-items: center;
  justify-content: center;
  gap: 3px;
  width: 27px;
}

.dots i {
  width: 2px;
  height: 2px;
  background: #999;
}

.formula-buttons {
  width: 131px;
}

.formula-buttons button {
  display: flex;
  flex: 1;
  justify-content: center;
}

.fx {
  font-family: "Liberation Serif", serif;
  font-size: 19px;
  font-style: italic;
}

.formula-input {
  flex: 1;
  padding-right: 7px;
}

.formula-input input {
  flex: 1;
  padding-left: 13px;
}

.strong {
  width: 5px;
  height: 5px;
}

/* sheet */
.workspace {
  display: flex;
  flex: 1;
  min-height: 0;
}

.sheet {
  position: relative;
  flex: 1;
  overflow: hidden;
  border-right: 1px solid #a3a6a5;
  background: #efefef;
}

table {
  width: 100%;
  table-layout: fixed;
  border-collapse: separate;
  border-spacing: 0;
  font-size: 25px;
  line-height: 34px;
  color: #1f1f1f;
}

.col-head { width: 40px; }
.col-A { width: 76px; }
.col-B { width: 128px; }
.col-C { width: 190px; }
.col-D { width: 136px; }
.col-E { width: 86px; }
.col-F { width: 127px; }
.col-G { width: 219px; }
.col-H { width: 160px; }
.col-I { width: 101px; }
.col-J { width: 128px; }
.col-K { width: 190px; }
.col-L { width: 160px; }
.col-M { width: 110px; }

th {
  padding: 0;
  box-sizing: border-box;
  background: #d4d8d7;
  font-size: 24px;
  font-weight: 400;
  overflow: hidden;
}

thead th {
  height: 32px;
  line-height: 30px;
  border-right: 1px solid #aaaeac;
}

thead th.on {
  border-bottom: 2px solid #17693b;
  background: #c3c3c3;
  color: #3d6a56;
}

.corner i {
  display: block;
  width: 0;
  margin: 2px 0 0 12px;
  border-left: 23px solid transparent;
  border-bottom: 23px solid #a6a9a8;
}

tbody th {
  height: 34px;
  border-right: 1px solid #a3a6a5;
  border-bottom: 1px solid #a9adab;
  line-height: 30px;
  vertical-align: bottom;
  padding-right: 8px;
}

tbody th.on {
  border-right: 3px solid #2c6b49;
  padding-right: 6px;
  background: #c3c3c3;
  color: #3d6a56;
}

tbody th span {
  display: block;
}

tbody tr:nth-child(4n + 1) > * {
  height: 33px;
}

tbody tr.row-1:first-child > * {
  height: 116px;
}

tbody tr.row-2 > * {
  height: 14px;
  line-height: 12px;
}

tbody tr.row-2 th span {
  display: flex;
  align-items: flex-end;
  justify-content: center;
  height: 13px;
  overflow: hidden;
  line-height: 22px;
}

td {
  height: 34px;
  padding: 0 4px;
  box-sizing: border-box;
  line-height: 30px;
  white-space: nowrap;
}

td.sel {
  background: #b5b8b7;
}

td.note {
  font-weight: 500;
  line-height: 34px;
  color: #111;
}

td.note em {
  font-style: normal;
  color: #c81414;
}

td.num {
  font-size: 24px;
  text-align: right;
}

td.head,
td.total {
  font-weight: 500;
  color: #111;
}

td.total.num {
  font-weight: 700;
}

td.total {
  background: #cadbe9;
}

td.head.sel,
td.total.sel {
  background: #9ca7b2;
}

td.head.sel {
  border-bottom: 1px solid #8292a6;
}

td.total.sel {
  border-top: 1px solid #8292a6;
}

td.total.current {
  background: #cadbe9;
}

.filter-cell {
  display: flex;
  align-items: center;
  justify-content: space-between;
  margin-right: -2px;
}

.filter-cell button {
  display: flex;
  align-items: center;
  justify-content: center;
  width: 20px;
  height: 20px;
  margin-top: 6px;
  border: 1px solid #858b92;
  background: #bfc2c4;
}

.banner {
  padding: 0;
  background: #17693b;
  border-bottom: 1px solid #8cab99;
}

.banner-inner {
  display: flex;
  justify-content: space-between;
  padding: 0 192px 0 23px;
  color: #eef3ee;
}

.banner h1 {
  margin: 6px 0 0;
  font-size: 33px;
  font-weight: 700;
  line-height: 42px;
}

.banner p {
  margin: 0;
  padding-left: 54px;
  font-size: 28px;
  line-height: 42px;
}

.brand {
  display: flex;
  align-items: center;
  gap: 16px;
  padding-top: 46px;
  font-size: 24px;
}

.selection {
  position: absolute;
  top: 161px;
  left: 115px;
  width: 1628px;
  height: 273px;
  border: 2px solid #1b5a36;
  box-sizing: border-box;
  pointer-events: none;
}

.selection i {
  position: absolute;
  right: -3px;
  bottom: -3px;
  width: 5px;
  height: 5px;
  border: 1px solid #efefef;
  background: #17693b;
}

.pointer {
  position: absolute;
  top: 498px;
  left: 1145px;
  display: flex;
  align-items: center;
  justify-content: center;
  width: 76px;
  height: 76px;
  border-radius: 50%;
  background: #f0ef6e;
}

/* scrollbars */
.v-scroll {
  display: flex;
  flex-direction: column;
  width: 16px;
  padding: 3px 0 1px 4px;
}

.v-scroll button,
.h-scroll button {
  display: flex;
  align-items: center;
  justify-content: center;
  flex: none;
  width: 18px;
  height: 18px;
  border: 1px solid #a9a9a9;
  box-sizing: border-box;
  background: #efefef;
}

.v-scroll button {
  width: 16px;
}

.up .triangle {
  transform: rotate(180deg);
}

.v-track,
.h-track {
  flex: 1;
  background: #cbcbcb;
}

.v-thumb {
  height: 21px;
  border: 1px solid #a9a9a9;
  box-sizing: border-box;
  background: #efefef;
}

.h-scroll {
  display: flex;
  width: 42%;
  height: 18px;
  margin-right: 25px;
}

.h-thumb {
  width: 54%;
  height: 18px;
  border: 1px solid #a9a9a9;
  box-sizing: border-box;
  background: #efefef;
}

/* sheet tabs */
.sheet-bar {
  display: flex;
  align-items: center;
  height: 35px;
  border-top: 2px solid #a3a6a5;
  border-bottom: 1px solid #b0b3b2;
  box-sizing: border-box;
  margin-bottom: 1px;
}

.sheet-nav {
  display: flex;
  gap: 28px;
  width: 112px;
  padding-left: 24px;
  box-sizing: border-box;
}

.sheet-nav .triangle {
  display: block;
  border-left-color: transparent;
  opacity: 0.4;
}

.sheet-nav .triangle.right {
  border-left-color: #666;
}

.sheet-tab {
  height: 24px;
  padding: 0 13px;
  border-right: 1px solid #8d9190;
  font-size: 16px;
  line-height: 19px;
}

.sheet-tab.active {
  align-self: flex-start;
  height: 27px;
  margin-top: -2px;
  padding: 0 14px;
  border-right: 0;
  border-bottom: 3px solid #17603c;
  background: #efefef;
  line-height: 28px;
  color: #2c7650;
}

.add-sheet {
  margin-left: 38px;
}

.bar-dots {
  margin-left: auto;
}

/* overlays */
.watermark {
  position: absolute;
  top: 20px;
  right: 19px;
  display: flex;
  pointer-events: none;
}

.watermark span {
  font-size: 46px;
  font-weight: 500;
  line-height: 50px;
  color: transparent;
  -webkit-text-stroke: 1px #aaa;
}

.outer {
  stroke: #aaa;
  stroke-width: 5;
}

.inner {
  stroke: #ebe9e9;
  stroke-width: 3;
}

.subtitle {
  position: absolute;
  right: 0;
  bottom: 97px;
  left: 0;
  margin: 0;
  text-align: center;
  font-size: 57px;
  font-weight: 700;
  line-height: 84px;
  color: #efefef;
  text-shadow: 2px 0 #000, -2px 0 #000, 0 2px #000, 0 -2px #000, 2px 2px #000, -2px -2px #000, 2px -2px #000, -2px 2px #000;
  pointer-events: none;
}
</style>
